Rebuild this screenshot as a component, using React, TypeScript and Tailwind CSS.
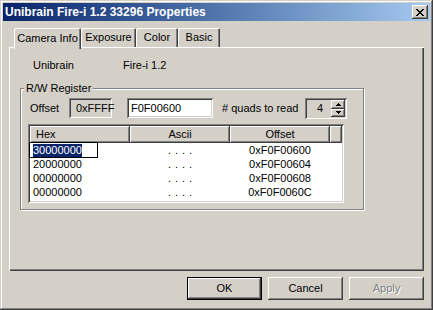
import React from "react";

const raised =
  "shadow-[inset_-1px_-1px_#404040,inset_1px_1px_#ffffff,inset_-2px_-2px_#808080,inset_2px_2px_#d4d0c8]";
const sunken =
  "shadow-[inset_1px_1px_#808080,inset_-1px_-1px_#ffffff,inset_2px_2px_#404040,inset_-2px_-2px_#d4d0c8]";

function CloseGlyph() {
  return (
    <svg width="8" height="7" viewBox="0 0 8 7" shapeRendering="crispEdges">
      <path
        fill="#000"
        d="M0 0h2v1H0zM6 0h2v1H6zM1 1h2v1H1zM5 1h2v1H5zM2 2h4v1H2zM3 3h2v1H3zM2 4h4v1H2zM1 5h2v1H1zM5 5h2v1H5zM0 6h2v1H0zM6 6h2v1H6z"
      />
    </svg>
  );
}

function Arrow({ up }: { up?: boolean }) {
  return (
    <svg width="5" height="3" viewBox="0 0 5 3" shapeRendering="crispEdges">
      <path fill="#000" d={up ? "M2 0h1v1H2zM1 1h3v1H1zM0 2h5v1H0z" : "M0 0h5v1H0zM1 1h3v1H1zM2 2h1v1H2z"} />
    </svg>
  );
}

function Tab({ label, w, selected }: { label: string; w: string; selected?: boolean }) {
  if (selected) {
    return (
      <div
        className={`relative z-10 ${w} h-[21px] bg-[#d4d0c8] rounded-tl-[2px] rounded-tr-[2px] shadow-[inset_1px_1px_#ffffff,inset_-1px_0_#404040,inset_-2px_0_#808080] flex items-start justify-center pt-[4px]`}
      >
        {label}
      </div>
    );
  }
  return (
    <div
      className={`${w} h-[19px] mb-[2px] bg-[#d4d0c8] rounded-tl-[2px] rounded-tr-[2px] shadow-[inset_1px_1px_#ffffff,inset_-1px_0_#404040,inset_-2px_0_#808080] flex items-start justify-center pt-[3px]`}
    >
      {label}
    </div>
  );
}

const rows = [
  { hex: "30000000", off: "0xF0F00600" },
  { hex: "20000000", off: "0xF0F00604" },
  { hex: "00000000", off: "0xF0F00608" },
  { hex: "00000000", off: "0xF0F0060C" },
];

export default function App() {
  return (
    <div
      className="w-[433px] h-[310px] bg-[#d4d0c8] p-[3px] flex flex-col text-[11px] leading-[13px] text-black shadow-[inset_-1px_-1px_#404040,inset_1px_1px_#d4d0c8,inset_-2px_-2px_#808080,inset_2px_2px_#ffffff]"
      style={{ fontFamily: '"Liberation Sans", Arial, sans-serif' }}
    >
      {/* Title bar */}
      <div className="h-[18px] flex items-center justify-between bg-gradient-to-r from-[#0a246a] to-[#a6caf0] pl-[2px] pr-[2px]">
        <span className="font-bold text-white text-[12px] leading-[14px]">Unibrain Fire-i 1.2 33296 Properties</span>
        <div className={`w-[16px] h-[14px] bg-[#d4d0c8] ${raised} flex items-center justify-center`}>
          <CloseGlyph />
        </div>
      </div>

      {/* Body */}
      <div className="flex flex-col px-[6px] pt-[7px]">
        {/* Tabs */}
        <div className="h-[21px] flex items-end pl-[5px]">
          <Tab label="Camera Info" w="w-[67px]" selected />
          <Tab label="Exposure" w="w-[55px]" />
          <Tab label="Color" w="w-[42px]" />
          <Tab label="Basic" w="w-[42px]" />
        </div>

        {/* Panel */}
        <div className="mt-[-2px] h-[224px] bg-[#d4d0c8] shadow-[inset_1px_1px_#ffffff,inset_-1px_-1px_#404040,inset_-2px_-2px_#808080] flex flex-col">
          <div className="pt-[12px] pl-[24px] flex">
            <span className="w-[90px]">Unibrain</span>
            <span>Fire-i 1.2</span>
          </div>

          {/* Group box */}
          <div className="relative mt-[16px] ml-[11px] w-[344px] h-[122px] border border-[#808080] shadow-[inset_1px_1px_#ffffff,1px_1px_#ffffff] pl-[7px] pt-[9px]">
            <span className="absolute top-[-7px] left-[3px] bg-[#d4d0c8] px-[2px]">R/W Register</span>

            <div className="flex items-center h-[20px] pl-[2px]">
              <span className="w-[39px]">Offset</span>
              <div className={`w-[43px] h-[20px] ${sunken} bg-[#d4d0c8] flex items-center pl-[7px]`}>0xFFFF</div>
              <div className={`ml-[15px] w-[86px] h-[20px] ${sunken} bg-white flex items-center pl-[4px]`}>F0F00600</div>
              <span className="ml-[9px] w-[83px]">&#35; quads to read</span>
              <div className={`w-[42px] h-[21px] ${sunken} bg-[#d4d0c8] flex items-center pl-[12px] pr-[2px] py-[2px]`}>
                <span className="flex-1">4</span>
                <div className="flex flex-col h-[17px] w-[14px]">
                  <div className={`h-[9px] bg-[#d4d0c8] ${raised} flex items-center justify-center`}>
                    <Arrow up />
                  </div>
                  <div className={`h-[8px] bg-[#d4d0c8] ${raised} flex items-center justify-center`}>
                    <Arrow />
                  </div>
                </div>
              </div>
            </div>

            {/* List view */}
            <div className={`mt-[6px] w-[316px] h-[79px] bg-white ${sunken} p-[2px] flex flex-col`}>
              <div className="h-[17px] flex bg-[#d4d0c8]">
                <div className={`w-[100px] ${raised} flex items-center pl-[6px]`}>Hex</div>
                <div className={`w-[100px] ${raised} flex items-center justify-center`}>Ascii</div>
                <div className={`w-[100px] ${raised} flex items-center justify-center`}>Offset</div>
                <div className={`flex-1 ${raised}`} />
              </div>
              {rows.map((r, i) => (
                <div key={i} className="h-[14px] flex items-center">
                  <div className="relative w-[100px] h-full flex items-center pl-[3px]">
                    {i === 0 ? (
                      <div className="absolute left-[-1px] top-[-1px] w-[69px] h-[16px] border border-black bg-white flex items-center pl-[3px]">
                        <span className="bg-[#0a246a] text-white leading-[13px]">{r.hex}</span>
                      </div>
                    ) : (
                      r.hex
                    )}
                  </div>
                  <div className="w-[100px] text-center tracking-[4px] pl-[4px]">....</div>
                  <div className="w-[100px] text-center">{r.off}</div>
                </div>
              ))}
            </div>
          </div>
        </div>

        {/* Buttons */}
        <div className="mt-[6px] flex justify-end gap-[6px]">
          <div className="w-[75px] h-[23px] bg-[#d4d0c8] shadow-[inset_0_0_0_1px_#000000,inset_-2px_-2px_#404040,inset_2px_2px_#ffffff,inset_-3px_-3px_#808080] flex items-center justify-center">
            OK
          </div>
          <div className={`w-[75px] h-[23px] bg-[#d4d0c8] ${raised} flex items-center justify-center`}>Cancel</div>
          <div className={`w-[75px] h-[23px] bg-[#d4d0c8] ${raised} flex items-center justify-center text-[#808080] [text-shadow:1px_1px_#ffffff]`}>
            Apply
          </div>
        </div>
      </div>
    </div>
  );
}
